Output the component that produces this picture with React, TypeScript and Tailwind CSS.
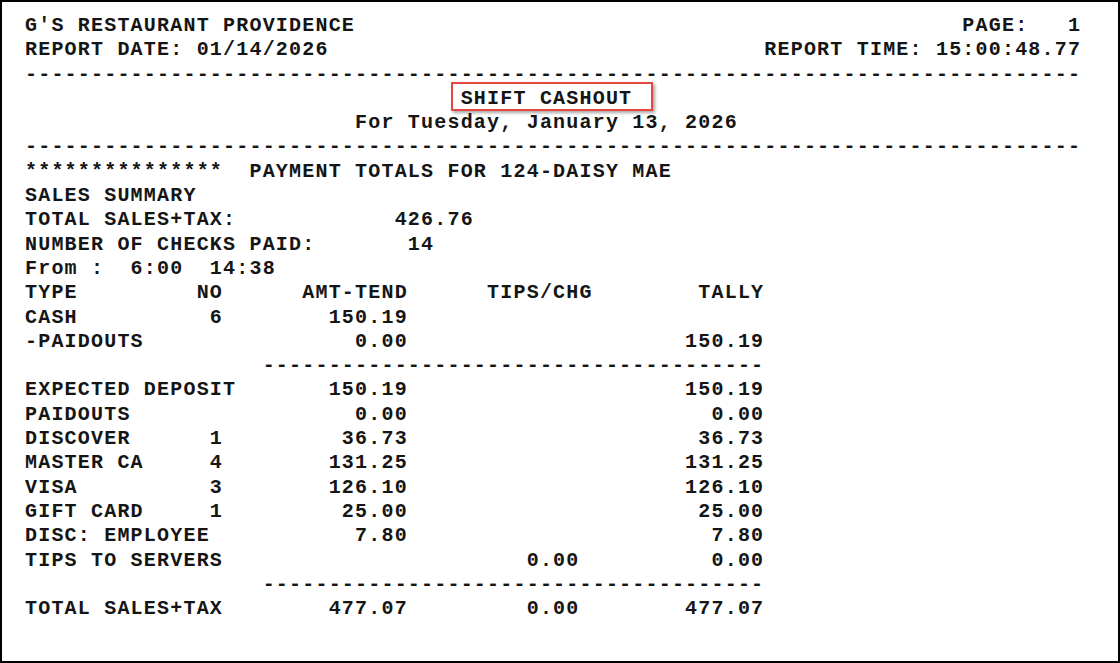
type Seg = [number, string]

// left-aligned at column
const L = (col: number, text: string): Seg => [col, text]
// right-aligned, last char at column
const R = (end: number, text: string): Seg => [end - text.length + 1, text]

function row(...segs: Seg[]) {
  let out = ""
  for (const [col, text] of segs) {
    if (out.length < col) out += " ".repeat(col - out.length)
    out += text
  }
  return out
}

const AMT = 28
const TIPS = 41
const TALLY = 55

const tenders: Array<[string, string, string, string, string]> = [
  ["EXPECTED DEPOSIT", "", "150.19", "", "150.19"],
  ["PAIDOUTS", "", "0.00", "", "0.00"],
  ["DISCOVER", "1", "36.73", "", "36.73"],
  ["MASTER CA", "4", "131.25", "", "131.25"],
  ["VISA", "3", "126.10", "", "126.10"],
  ["GIFT CARD", "1", "25.00", "", "25.00"],
  ["DISC: EMPLOYEE", "", "7.80", "", "7.80"],
  ["TIPS TO SERVERS", "", "", "0.00", "0.00"],
]

function tenderRow([name, no, amt, tips, tally]: (typeof tenders)[number]) {
  const segs: Seg[] = [L(0, name)]
  if (no) segs.push(R(14, no))
  if (amt) segs.push(R(AMT, amt))
  if (tips) segs.push(R(TIPS, tips))
  if (tally) segs.push(R(TALLY, tally))
  return row(...segs)
}

const fullRule = "-".repeat(80)
const subRule = row(L(18, "-".repeat(38)))

const lines: string[] = [
  row(L(0, "G'S RESTAURANT PROVIDENCE"), L(71, "PAGE:   1")),
  row(L(0, "REPORT DATE: 01/14/2026"), L(56, "REPORT TIME: 15:00:48.77")),
  fullRule,
  "@title",
  row(L(25, "For Tuesday, January 13, 2026")),
  fullRule,
  row(L(0, "*".repeat(15)), L(17, "PAYMENT TOTALS FOR 124-DAISY MAE")),
  "SALES SUMMARY",
  row(L(0, "TOTAL SALES+TAX:"), R(33, "426.76")),
  row(L(0, "NUMBER OF CHECKS PAID:"), R(30, "14")),
  "From :  6:00  14:38",
  row(L(0, "TYPE"), L(13, "NO"), L(21, "AMT-TEND"), L(35, "TIPS/CHG"), L(51, "TALLY")),
  row(L(0, "CASH"), R(14, "6"), R(AMT, "150.19")),
  row(L(0, "-PAIDOUTS"), R(AMT, "0.00"), R(TALLY, "150.19")),
  subRule,
  ...tenders.map(tenderRow),
  subRule,
  row(L(0, "TOTAL SALES+TAX"), R(AMT, "477.07"), R(TIPS, "0.00"), R(TALLY, "477.07")),
]

function TitleLine() {
  return (
    <div>
      {" ".repeat(33)}
      <span className="relative">
        SHIFT CASHOUT
        <span className="absolute -left-[10px] -right-[21px] -top-[5px] -bottom-[1px] border-2 border-[#e8463f] shadow-[2px_2px_3px_rgba(0,0,0,0.35)]" />
      </span>
    </div>
  )
}

export default function App() {
  return (
    <div className="w-[1120px] h-[663px] bg-white border-2 border-black overflow-hidden">
      <div
        className="pl-[23px] pt-[12px] text-[20px] leading-[24.3px] tracking-[1.2px] font-bold text-[#151515] whitespace-pre"
        style={{ fontFamily: '"Liberation Mono", "Courier New", monospace' }}
      >
        {lines.map((line, i) =>
          line === "@title" ? <TitleLine key={i} /> : <div key={i}>{line || " "}</div>,
        )}
      </div>
    </div>
  )
}
